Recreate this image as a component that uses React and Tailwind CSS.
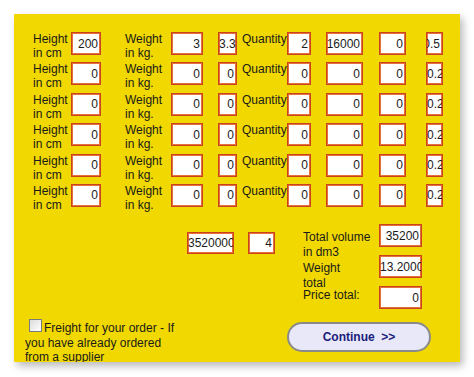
const ROWS = [
    { h: '200', w: '3', kg: '3.3', q: '2', vol: '16000', x: '0', r: '0.5', rEnd: true },
    { h: '0', w: '0', kg: '0', q: '0', vol: '0', x: '0', r: '0.25' },
    { h: '0', w: '0', kg: '0', q: '0', vol: '0', x: '0', r: '0.25' },
    { h: '0', w: '0', kg: '0', q: '0', vol: '0', x: '0', r: '0.25' },
    { h: '0', w: '0', kg: '0', q: '0', vol: '0', x: '0', r: '0.25' },
    { h: '0', w: '0', kg: '0', q: '0', vol: '0', x: '0', r: '0.25' }
];

function Box({ value, className, align = 'end' }) {
    return (
        <div
            className={
                'flex items-center overflow-hidden whitespace-nowrap bg-white border border-[#c9441c] shadow-[inset_0_0_0_1px_#e6703a] h-[23px] text-[12px] text-[#1a1a1a] ' +
                (align === 'end' ? 'justify-end pr-[2px] ' : 'justify-start ') +
                className
            }
        >
            <span className="shrink-0">{value}</span>
        </div>
    );
}

export default function App() {
    return (
        <div className="min-h-screen bg-white pt-[14px] pl-[14px] font-['Liberation_Sans',Arial,sans-serif] text-[#1a1a1a]">
            <div className="w-[446px] h-[348px] overflow-hidden bg-[#f0d800] shadow-[3px_4px_8px_rgba(0,0,0,0.28)]">
                {/* item rows */}
                <div className="pl-[19px] pt-[18px]">
                    {ROWS.map((row, i) => (
                        <div key={i} className="flex items-start h-[30.4px]">
                            <div className="w-[38px] text-[12px] leading-[14px]">Height<br />in cm</div>
                            <Box value={row.h} className="w-[30px]" />
                            <div className="ml-[24px] w-[46px] text-[12px] leading-[14px]">Weight<br />in kg.</div>
                            <Box value={row.w} className="w-[32px]" />
                            <Box value={row.kg} className="ml-[15px] w-[19px]" align={i === 0 ? 'start' : 'end'} />
                            <div className="ml-[5px] w-[45px] text-[12px] leading-[14px]">Quantity</div>
                            <Box value={row.q} className="w-[24px]" />
                            <Box value={row.vol} className="ml-[15px] w-[37px]" />
                            <Box value={row.x} className="ml-[16px] w-[27px]" />
                            <Box value={row.r} className="ml-[20px] w-[17px]" align={row.rEnd ? 'end' : 'start'} />
                        </div>
                    ))}
                </div>

                {/* totals */}
                <div className="flex items-start pl-[173px]">
                    <Box value="3520000" className="mt-[18px] w-[47px] !h-[22px]" align="start" />
                    <Box value="4" className="mt-[18px] ml-[14px] w-[27px] !h-[22px]" />
                    <div className="mt-[16px] ml-[28px] w-[70px] text-[12px] leading-[15px]">
                        <div>Total volume<br />in dm3</div>
                        <div className="mt-[1px]">Weight<br />total</div>
                        <div className="-mt-[3px]">Price total:</div>
                    </div>
                    <div className="mt-[10px] ml-[6px] flex flex-col gap-[8px]">
                        <Box value="35200" className="w-[43px]" />
                        <Box value="13.2000" className="w-[43px]" align="start" />
                        <Box value="0" className="w-[43px]" />
                    </div>
                </div>

                {/* freight + continue */}
                <div className="mt-[10px] flex items-start pl-[11px]">
                    <div className="w-[150px] text-[12px] leading-[14.5px]">
                        <span className="inline-block ml-[4px] mr-[2px] w-[13px] h-[13px] border border-[#7a7a7a] bg-gradient-to-br from-[#dcdcdc] to-white"></span>
                        Freight for your order - If you have already ordered from a supplier
                    </div>
                    <button className="ml-[112px] mt-[3px] w-[144px] h-[30px] rounded-full border-2 border-[#8a8a8a] bg-[#e8e8f8] text-[12px] font-bold text-[#1c1c7c] whitespace-pre">
                        {'Continue  >>'}
                    </button>
                </div>
            </div>
        </div>
    );
}
